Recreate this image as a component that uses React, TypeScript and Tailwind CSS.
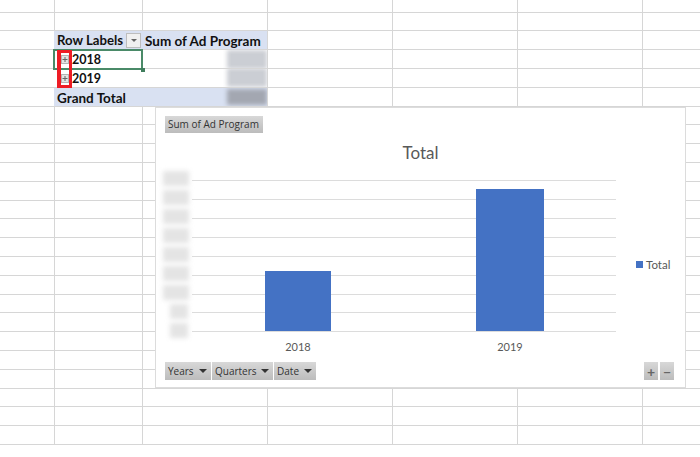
const colWidths = ["w-[54px]", "w-[88px]", "w-[125px]", "w-[125px]", "w-[125px]", "w-[125px]", "w-[58px]"];
const rowCount = 24;

function Plus() {
  return (
    <span className="mr-[3px] mt-[1px] flex h-[9px] w-[8px] items-center justify-center border border-[#b4b4b4] bg-[#e4e4e4]">
      <svg width="6" height="7" viewBox="0 0 6 7"><path d="M0.5 3.5h5M3 1v5" stroke="#666" strokeWidth="1" /></svg>
    </span>
  );
}

function Blur({ className }: { className: string }) {
  return <div className={"blur-[2px] " + className} />;
}

function PivotRow({ index }: { index: number }) {
  if (index === 2) {
    return (
      <>
        <div className="flex w-[88px] shrink-0 items-center justify-between bg-[#d9e1f2] pl-[3px] pr-[1px] text-[13.2px] font-bold text-[#111]">
          <span className="pt-[2px]">Row Labels</span>
          <span className="flex h-[15px] w-[15px] items-center justify-center border border-[#bdbdbd] bg-[#f0f0f0]">
            <span className="border-x-[3px] border-t-[3px] border-x-transparent border-t-[#666]" />
          </span>
        </div>
        <div className="flex w-[125px] shrink-0 items-center bg-[#d9e1f2] pl-[3px] pt-[2px] text-[13.5px] font-bold text-[#111]">Sum of Ad Program</div>
      </>
    );
  }
  if (index === 3 || index === 4) {
    return (
      <>
        <div className="flex w-[88px] shrink-0 items-center pl-[7px] text-[12.5px] font-bold text-[#111]">
          <Plus />
          <span className="pt-[3px]">{index === 3 ? "2018" : "2019"}</span>
        </div>
        <div className="flex w-[125px] shrink-0 items-center justify-end overflow-hidden">
          <Blur className="h-[19px] w-[40px] bg-[#cbced4]" />
        </div>
      </>
    );
  }
  return (
    <>
      <div className="flex w-[88px] shrink-0 items-center bg-[#d9e1f2] pl-[3px] pt-[2px] text-[13.5px] font-bold text-[#111]">Grand Total</div>
      <div className="flex w-[125px] shrink-0 items-center justify-end overflow-hidden bg-[#d9e1f2]">
        <Blur className="h-[16px] w-[40px] bg-[#a3a7b1]" />
      </div>
    </>
  );
}

function FieldButton({ label, arrow = true, className = "" }: { label: string; arrow?: boolean; className?: string }) {
  return (
    <div className={"flex items-center bg-gradient-to-b from-[#d8d8d8] to-[#bcbcbc] px-[3px] font-['Open_Sans',sans-serif] text-[10px] text-[#333] " + className}>
      <span>{label}</span>
      {arrow && <span className="ml-auto mr-[1px] border-x-[4px] border-t-[4px] border-x-transparent border-t-[#333]" />}
    </div>
  );
}

function Plot() {
  const lines = [0, 19, 38, 57, 76, 95, 114, 132, 151];
  return (
    <svg width="424" height="153" viewBox="0 0 424 153" className="block">
      {lines.map((y) => (
        <line key={y} x1="0" x2="424" y1={y + 0.5} y2={y + 0.5} stroke="#dcdcdc" strokeWidth="1" />
      ))}
      <rect x="73" y="91" width="66" height="60" fill="#4472c4" />
      <rect x="284" y="9" width="68" height="142" fill="#4472c4" />
    </svg>
  );
}

export default function App() {
  return (
    <div className="relative h-[457px] w-[700px] overflow-hidden bg-white font-['Lato',sans-serif]">
      <div className="flex flex-col">
        {Array.from({ length: rowCount }).map((_, r) => (
          <div key={r} className={"flex shrink-0 border-b border-[#d6d6d6] " + (r === 0 ? "h-[12.6px]" : "h-[18.8px]")}>
            {colWidths.map((w, c) => {
              if (r >= 2 && r <= 4 && c === 1) return <PivotRow key={c} index={r} />;
              if (r === 5 && c === 1) return <PivotRow key={c} index={5} />;
              if (r >= 2 && r <= 5 && c === 2) return null;
              return <div key={c} className={"shrink-0 border-[#d6d6d6] " + w + (c === 0 ? "" : " border-l")} />;
            })}
          </div>
        ))}
      </div>

      {/* selected cell */}
      <div className="absolute left-[53px] top-[49px] h-[21px] w-[90px] border-2 border-[#4a8a68]" />
      <div className="absolute left-[141px] top-[68px] h-[4px] w-[4px] bg-[#3f7d5c]" />
      {/* red highlight */}
      <div className="absolute left-[57px] top-[50px] h-[38px] w-[15px] border-y-[3px] border-r-[3px] border-l-[4px] border-[#ee1c25]" />

      {/* pivot chart */}
      <div className="absolute left-[155px] top-[107px] flex h-[281px] w-[531px] flex-col border border-[#dcdcdc] bg-white">
        <div className="pl-[9px] pt-[8px]">
          <FieldButton label="Sum of Ad Program" arrow={false} className="h-[17px] w-[98px]" />
        </div>
        <div className="mt-[10px] text-center text-[17px] leading-[20px] text-[#595959]">Total</div>
        <div className="mt-[17px] flex">
          <div className="ml-[4px] h-[153px] w-[32px]">
            <div className="-mt-[9px] flex flex-col items-center gap-[4px] blur-[1px]">
              {[0, 1, 2, 3, 4, 5, 6, 7, 8].map((i) => (
                <Blur key={i} className={"h-[15px] bg-[#e4e4e4] " + (i < 7 ? "w-[26px]" : "ml-[6px] w-[18px]")} />
              ))}
            </div>
          </div>
          <div className="relative">
            <Plot />
          </div>
          <div className="ml-[20px] flex items-center gap-[3px] pt-[16px] text-[11.5px] text-[#595959]">
            <span className="h-[7px] w-[7px] bg-[#4472c4]" />
            <span>Total</span>
          </div>
        </div>
        <div className="ml-[36px] mt-[4px] flex w-[424px] text-[11px] leading-[20px] text-[#595959]">
          <div className="flex-1 text-center">2018</div>
          <div className="flex-1 text-center">2019</div>
        </div>
        <div className="mt-auto mb-[7px] flex items-center pl-[9px] pr-[11px]">
          <div className="flex gap-[1px]">
            <FieldButton label="Years" className="h-[18px] w-[46px]" />
            <FieldButton label="Quarters" className="h-[18px] w-[61px]" />
            <FieldButton label="Date" className="h-[18px] w-[42px]" />
          </div>
          <div className="ml-auto flex gap-[2px]">
            <div className="flex h-[18px] w-[14px] items-center justify-center bg-gradient-to-b from-[#d8d8d8] to-[#bcbcbc] text-[14px] font-bold text-[#666]">+</div>
            <div className="flex h-[18px] w-[14px] items-center justify-center bg-gradient-to-b from-[#d8d8d8] to-[#bcbcbc] text-[14px] font-bold text-[#666]">−</div>
          </div>
        </div>
      </div>
    </div>
  );
}
